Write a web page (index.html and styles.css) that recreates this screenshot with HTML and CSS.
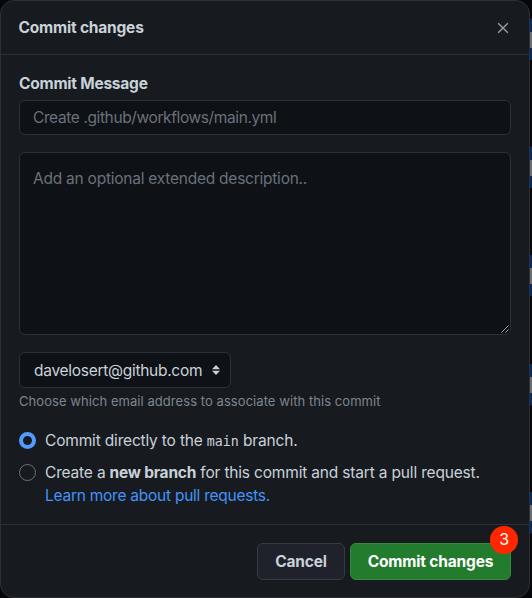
FILE: index.html
```
<!DOCTYPE html>
<html lang="en">
<head>
<meta charset="utf-8">
<title>Commit changes</title>
<link rel="stylesheet" href="styles.css">
</head>
<body>
<div class="page">
  <main class="dialog">
    <header class="header">
      <h1 class="title">Commit changes</h1>
      <svg class="close" viewBox="0 0 12 12"><path d="M1.2 1.2 10.8 10.8M10.8 1.2 1.2 10.8"/></svg>
    </header>
    <section class="body">
      <h2 class="label">Commit Message</h2>
      <div class="field input"><span class="t-input">Create .github/workflows/main.yml</span></div>
      <div class="field textarea"><span class="t-area">Add an optional extended description..</span>
        <svg class="grip" viewBox="0 0 8 8"><path d="M.5 7.5l7-7M4.5 7.5l3-3"/></svg>
      </div>
      <div class="field select"><span class="t-email">davelosert@github.com</span>
        <svg class="arrows" viewBox="0 0 8 10"><path d="M4 0 8 4.3H0zM4 10 8 5.7H0z"/></svg>
      </div>
      <p class="hint">Choose which email address to associate with this commit</p>
      <div class="option"><span class="radio checked"></span><p class="text">Commit directly to the <code>main</code> branch.</p></div>
      <div class="option second"><span class="radio"></span><p class="text">Create a <b>new branch</b> for this commit and start a pull request.<br><a class="t-link">Learn more about pull requests.</a></p></div>
    </section>
    <footer class="footer">
      <div class="button cancel">Cancel</div>
      <div class="button primary">Commit changes<span class="badge">3</span></div>
    </footer>
  </main>
  <div class="behind">
    <i class="row"></i><i class="row r2"></i><i class="row r3"></i><i class="row r4"></i><i class="row r5"></i>
  </div>
</div>
</body>
</html>
```

FILE: styles.css
```
* { box-sizing: border-box; }
body { margin: 0; background: #05070a; color: #c9d1d9; font: 15.5px/23px Inter, "Liberation Sans", sans-serif; overflow: hidden; }
h1, h2, p { margin: 0; font-size: inherit; font-weight: 400; white-space: nowrap; }
svg { display: block; }
.page { display: flex; width: 532px; height: 598px; }
.dialog { width: 530px; height: 598px; display: flex; flex-direction: column; background: #171b20; border: 1px solid #2d3136; border-radius: 14px; }
.header { display: flex; justify-content: space-between; align-items: center; height: 54px; padding: 0 20.5px 0 17.5px; border-bottom: 1px solid #2d3136; }
.title, .label { font-weight: 650; letter-spacing: -.2px; }
.close { width: 12px; height: 12px; fill: none; stroke: #989fa8; stroke-width: 1.4; }
.body { flex: 1; padding: 17px 18px 0; }
.label { height: 28px; letter-spacing: -.23px; }
.field { display: flex; background: #0e1116; border: 1px solid #2b3036; border-radius: 6px; color: #6a717b; white-space: nowrap; }
.input { height: 35px; align-items: center; padding-left: 13px; letter-spacing: -.39px; }
.textarea { position: relative; height: 183px; margin-top: 17px; padding: 14px 13px; letter-spacing: -.24px; }
.grip { position: absolute; right: 1px; bottom: 1px; width: 8px; height: 8px; fill: none; stroke: #a4a7aa; stroke-width: 1; }
.select { width: 212px; height: 36px; margin-top: 17px; padding: 0 10px 0 14px; align-items: center; justify-content: space-between; color: #c9d1d9; letter-spacing: -.28px; }
.arrows { width: 8px; height: 10px; fill: #c9d1d9; }
.hint { height: 41px; padding-top: 3px; font-size: 13px; line-height: 21px; color: #7d8590; letter-spacing: .06px; }
.option { display: flex; gap: 9px; }
.second { margin-top: 9px; }
.radio { width: 17px; height: 17px; margin-top: 3px; border: 1px solid #6b717a; border-radius: 50%; flex: none; }
.checked { border: 4px solid #539bff; background: #171b20; }
.text { line-height: 23px; letter-spacing: -.175px; }
code { font: 13.3px/1 "DejaVu Sans Mono", monospace; letter-spacing: 0; }
.text b { font-weight: 650; letter-spacing: -.23px; }
.t-link { color: #4493f8; letter-spacing: -.25px; }
.footer { display: flex; justify-content: flex-end; gap: 5px; height: 73px; border-top: 1px solid #2d3136; padding: 18px 18px 0; }
.button { display: flex; align-items: center; justify-content: center; height: 37px; border: 1px solid #363a42; border-radius: 6px; background: #1f222a; font-weight: 650; letter-spacing: -.17px; white-space: nowrap; }
.cancel { width: 88px; }
.primary { position: relative; width: 161px; background: #237b2e; border-color: #38893f; color: #fff; }
.badge { position: absolute; top: -18px; right: -8px; width: 28px; height: 28px; border-radius: 50%; background: #ff2600; text-align: center; line-height: 27px; font-weight: 400; font-size: 16px; }
.behind { width: 2px; padding-top: 19px; }
.row { display: block; height: 41px; background: linear-gradient(#062a60 13px, #6c6f73 13px 29px, #062a60 29px); }
.r2 { margin-top: 87px; }
.r3 { margin-top: 67px; }
.r4 { margin-top: 68px; }
.r5 { margin-top: 87px; }
```
